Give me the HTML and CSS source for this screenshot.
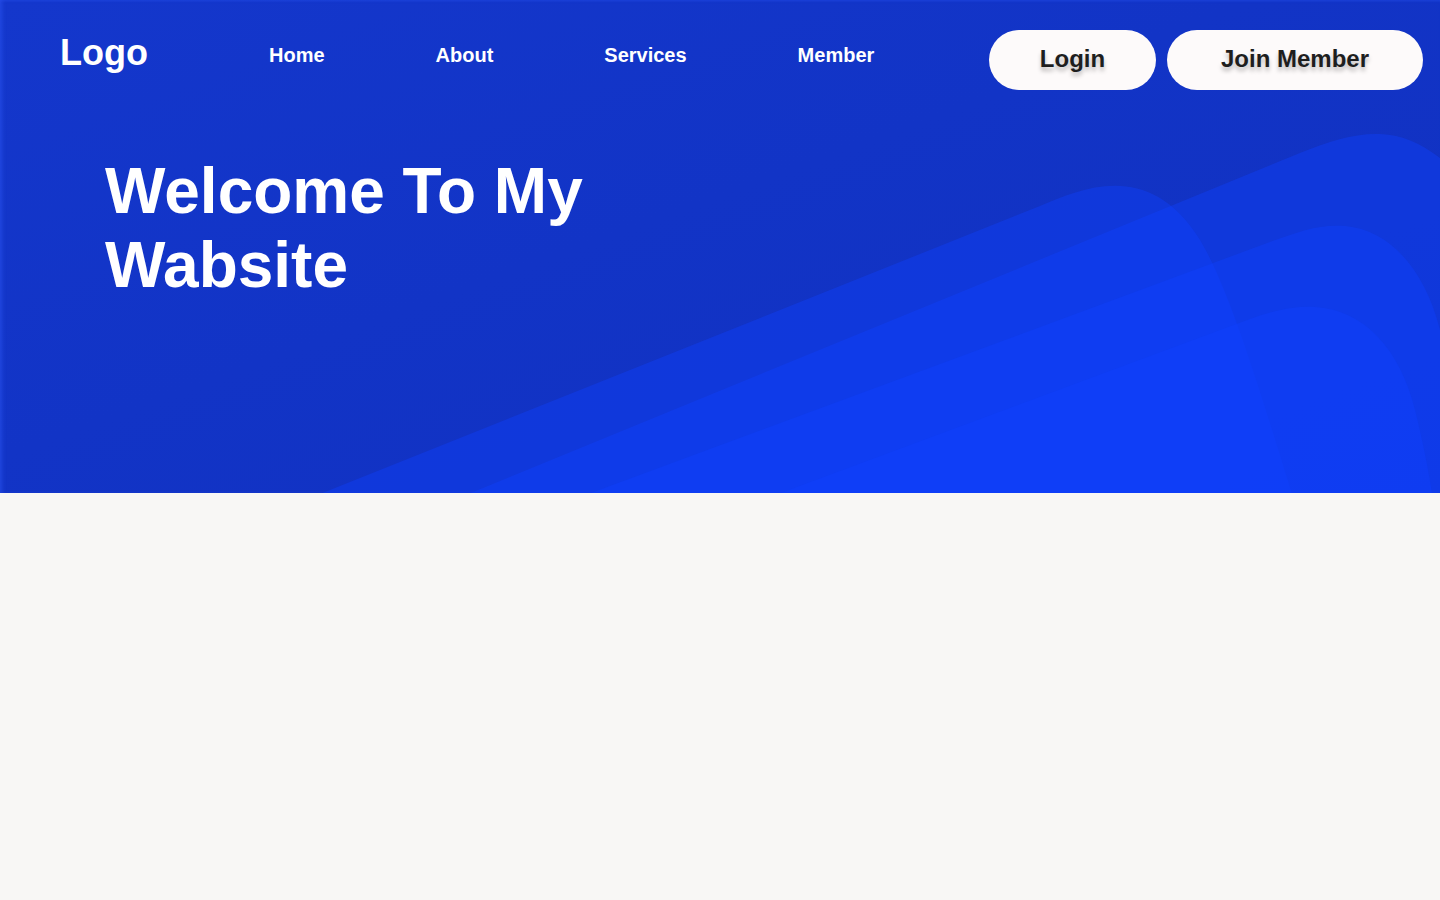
FILE: index.html
```html
<!DOCTYPE html>
<html lang="en">
<head>
<meta charset="utf-8">
<title>Welcome To My Wabsite</title>
<link rel="stylesheet" href="styles.css">
</head>
<body>
<section class="hero">
  <svg class="hero-bg" viewBox="0 0 1440 493" preserveAspectRatio="none" aria-hidden="true">
    <path class="wave" d="M405 520 L1300 153 C1330 141 1355 133 1380 134 C1410 135 1432 150 1462 176 L1560 520 Z"/>
    <path class="wave" d="M255 520 L1040 206 C1085 187 1150 160 1200 240 C1230 290 1260 390 1300 520 Z"/>
    <path class="wave" d="M518 520 L1270 242 C1300 231 1320 224 1345 226 C1390 230 1425 270 1440 330 L1470 520 Z"/>
    <path class="wave" d="M708 520 L1250 319 C1275 310 1295 306 1315 307 C1365 310 1400 350 1415 410 C1425 450 1432 490 1436 520 Z"/>
  </svg>
  <header class="topbar">
    <div class="logo">Logo</div>
    <nav class="menu">
      <a class="menu-link" href="#">Home</a>
      <a class="menu-link" href="#">About</a>
      <a class="menu-link" href="#">Services</a>
      <a class="menu-link" href="#">Member</a>
    </nav>
    <div class="actions">
      <a class="pill pill-login" href="#">Login</a>
      <a class="pill pill-join" href="#">Join Member</a>
    </div>
  </header>
  <h1 class="headline">Welcome To My Wabsite</h1>
</section>
</body>
</html>
```
FILE: styles.css
```css
* { box-sizing: border-box; }

html, body {
  margin: 0;
  padding: 0;
}

body {
  background: #f8f7f5;
  font-family: "Liberation Sans", Arial, sans-serif;
  min-height: 900px;
}

.hero {
  position: relative;
  height: 493px;
  overflow: hidden;
  background: linear-gradient(160deg, #1437cc 0%, #1234c6 45%, #1130c0 100%);
  box-shadow: inset 4px 0 4px -2px rgba(40, 80, 235, 0.7), inset 0 3px 3px -2px rgba(40, 80, 235, 0.5);
}

.hero-bg {
  position: absolute;
  inset: 0;
  width: 100%;
  height: 100%;
  z-index: 0;
}

.wave {
  fill: rgba(16, 66, 255, 0.4);
}

.topbar {
  position: relative;
  z-index: 1;
  display: flex;
  align-items: center;
  padding: 30px 17px 0 60px;
}

.logo {
  color: #ffffff;
  font-size: 36px;
  font-weight: 700;
  line-height: 41px;
  margin-bottom: 15px;
}

.menu {
  display: flex;
  gap: 111px;
  margin-left: 121px;
  margin-bottom: 10px;
}

.menu-link {
  color: #ffffff;
  text-decoration: none;
  font-size: 20px;
  font-weight: 700;
  line-height: 23px;
}

.actions {
  display: flex;
  gap: 11px;
  margin-left: auto;
}

.pill {
  display: flex;
  align-items: center;
  justify-content: center;
  height: 60px;
  border-radius: 30px;
  background: #fdfafa;
  color: #1e1e1e;
  text-decoration: none;
  font-size: 24px;
  font-weight: 700;
  padding-bottom: 2px;
  text-shadow: 0 4px 4px rgba(0, 0, 0, 0.25);
}

.pill-login { width: 167px; }
.pill-join { width: 256px; }

.headline {
  position: relative;
  z-index: 1;
  margin: 64px 0 0 105px;
  max-width: 620px;
  color: #ffffff;
  font-size: 64px;
  font-weight: 700;
  line-height: normal;
}
```
